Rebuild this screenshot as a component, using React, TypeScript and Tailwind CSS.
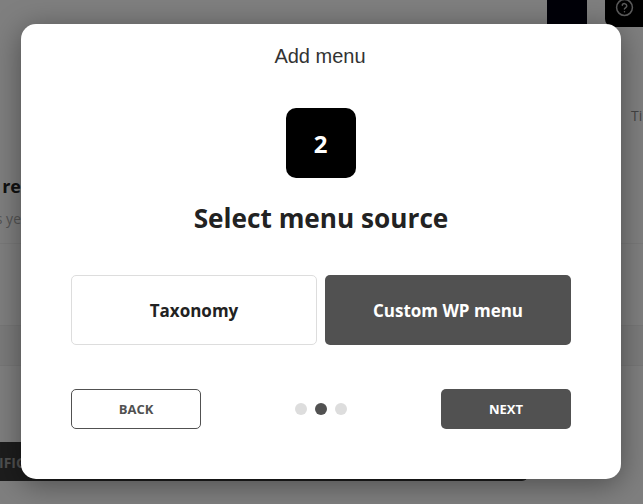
const sans = "font-['Open_Sans','Noto_Sans',sans-serif]";

export default function App() {
  return (
    <div className={`relative h-[504px] w-[643px] overflow-hidden bg-white ${sans}`}>
      {/* Page behind the dialog */}
      <div className="flex h-[504px] flex-col">
        <div className="flex h-[27px] shrink-0 items-start justify-end">
          <div className="mr-[18px] h-[24px] w-[40px] bg-[#000010]" />
          <div className="flex h-[27px] w-[38px] justify-center rounded-bl-lg bg-black">
            <svg viewBox="0 0 24 24" className="-mt-[2px] h-[19px] w-[19px] text-[#b5b5b5]" fill="none" stroke="currentColor" strokeWidth="1.9" strokeLinecap="round" strokeLinejoin="round">
              <circle cx="12" cy="12" r="10" />
              <path d="M9.1 9a3 3 0 0 1 5.8 1c0 2-3 2.6-3 4" />
              <path d="M12 17.5h.01" />
            </svg>
          </div>
        </div>
        <div className="mt-[79px] h-[20px] pl-[631px] text-[14px] leading-[20px] whitespace-nowrap text-[#888888]">Ti</div>
        <div className="mt-[48px] flex h-[24px] w-[21px] justify-end text-[18px] leading-[24px] font-bold whitespace-nowrap text-[#222222]">re</div>
        <div className="mt-[11px] flex h-[20px] w-[21px] justify-end text-[14px] leading-[20px] whitespace-nowrap text-[#aaaaaa]">s ye</div>
        <div className="mt-[14px] h-[82px] shrink-0 border-t border-[#f2f2f2]" />
        <div className="h-[40px] shrink-0 border-t border-[#eeeeee] bg-[#f7f7f7]" />
        <div className="h-[77px] shrink-0 border-t border-[#eeeeee]" />
        <div className="flex h-[39px] w-[528px] shrink-0 items-center overflow-hidden rounded-br-md bg-[#3a3a3a] pt-px text-[14px] font-bold whitespace-nowrap text-[#a0a0a0]">
          <span className="-ml-px">IFIG</span>
        </div>
      </div>

      {/* Dialog */}
      <div className="absolute inset-0 flex items-center justify-center bg-black/50 pr-px pb-px">
        <div className="flex h-[455px] w-[600px] flex-col items-center rounded-[15px] bg-white px-[50px] shadow-[0_5px_30px_rgba(0,0,0,0.4)]">
          <h2 className="mt-[20px] pr-[2px] font-['Liberation_Sans',Arial,sans-serif] text-[20px] leading-[24px] font-normal text-[#333333]">Add menu</h2>
          <div className="mt-[40px] flex h-[70px] w-[70px] items-center justify-center rounded-[10px] bg-black pt-px pr-px text-[24px] font-bold text-white">2</div>
          <h1 className="mt-[22px] text-[26.2px] leading-[36px] font-bold text-[#222222]">Select menu source</h1>
          <div className="mt-[39px] grid w-full grid-cols-2 gap-2">
            <button className="h-[70px] rounded-[5px] border border-[#dddddd] bg-white pt-[2px] text-[17px] font-bold text-[#222222]">Taxonomy</button>
            <button className="h-[70px] rounded-[5px] bg-[#515151] pt-[2px] text-[17px] font-bold text-white">Custom WP menu</button>
          </div>
          <div className="mt-[44px] flex w-full items-center justify-between">
            <button className="h-[40px] w-[130px] rounded-[5px] border border-[#515151] bg-white pt-px text-[13px] font-bold text-[#515151]">BACK</button>
            <div className="flex gap-2">
              <span className="h-3 w-3 rounded-full bg-[#dddddd]" />
              <span className="h-3 w-3 rounded-full bg-[#515151]" />
              <span className="h-3 w-3 rounded-full bg-[#dddddd]" />
            </div>
            <button className="h-[40px] w-[130px] rounded-[5px] bg-[#515151] pt-px text-[13px] font-bold text-white">NEXT</button>
          </div>
        </div>
      </div>
    </div>
  );
}
